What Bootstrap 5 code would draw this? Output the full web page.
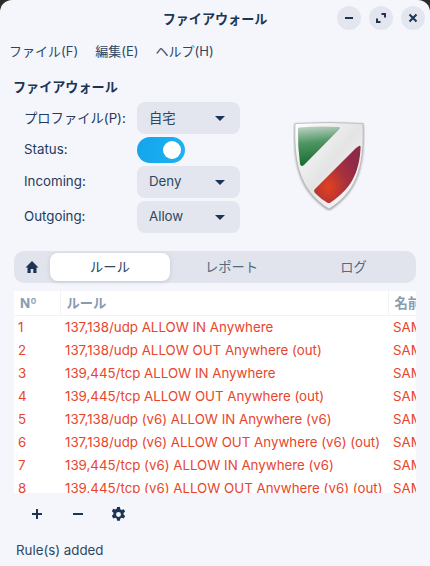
<!doctype html>
<html lang="ja">
<head>
<meta charset="utf-8">
<title>ファイアウォール</title>
<link href="https://cdn.jsdelivr.net/npm/bootstrap@5.3.0/dist/css/bootstrap.min.css" rel="stylesheet">
<style>
html,body{height:100%;margin:0;background:#2b2b2b;overflow:hidden}
body{font-family:Inter,"Noto Sans CJK JP",sans-serif;font-size:13.3px;color:#1f3a5c;line-height:16px}
.win{width:430px;height:566px;background:#f5f6fb;border-radius:12px 12px 0 0;overflow:hidden}
.titlebar{height:38px;position:relative}
.wintitle{font-weight:700;font-size:13.1px;color:#1c3554}
.winbtns{position:absolute;right:5px;top:6px;gap:8px}
.winbtn{width:24px;height:24px;border-radius:50%;background:#e3e6ee}
.menubar{height:26px;padding-left:9px;gap:17px;color:#2c4663;font-size:13px}
.heading{font-weight:700;margin:14px 0 0 13px;height:18px;line-height:18px;color:#1c3554;font-size:13.1px}
.formarea{margin-top:6px;padding-left:24px;padding-right:14px;height:131px}
.formcol{width:216px}
.lbl{width:113px}
.latintxt{padding-bottom:2px}
.rowh{height:32px}
.rowsw{height:26px;margin:3px 0}
.rowgap{margin-top:3px}
.sel{width:103px;height:32px;background:#e3e6ee;border-radius:8px;padding:0 15px 0 12px;color:#2c4663}
.caret{width:0;height:0;border-left:5px solid transparent;border-right:5px solid transparent;border-top:5px solid #1c3554}
.swt{width:48px;height:26px;border-radius:13px;background:linear-gradient(100deg,#13a4ec,#1fb2f2);padding:4px 4px 4px 26px}
.knob{width:18px;height:18px;border-radius:50%;background:#fff}
.shield{flex:1;padding-left:2px}
.shieldsvg{margin-top:19px}
.tabsbar{margin:18px 14px 0;height:32px;background:#e1e4ec;border-radius:10px;padding:2px 0}
.homebtn{width:36px}
.tabact{width:120px;background:#fff;border-radius:8px;box-shadow:0 1px 4px rgba(30,50,90,.15);color:#2c4663}
.tabitem{width:123px;color:#55697f}
.tabitem.lastt{width:121px}
.tblwrap{margin:8px 14px 0;height:202px;overflow:hidden;background:#fff}
.ruletbl{table-layout:fixed;width:500px;border-collapse:collapse;color:#e8452c;white-space:nowrap}
.ruletbl th{height:24px;font-weight:700;color:#8a9bb0;border-right:1px solid #f0f2f6;border-bottom:1px solid #f0f2f6;padding:0 0 0 6px;overflow:hidden}
.ruletbl td{height:23px;padding:0 0 0 5px;overflow:hidden}
.ruletbl td:first-child{padding-left:4px}
.toolbar{height:42px;padding-left:16px}
.toolbtn{width:41px}
.statusline{margin:7px 0 0 16px;color:#2c4663}
</style>
</head>
<body>
<div class="win d-flex flex-column">
  <div class="titlebar d-flex align-items-center justify-content-center">
    <span class="wintitle">ファイアウォール</span>
    <div class="winbtns d-flex">
      <div class="winbtn d-flex align-items-center justify-content-center"><svg width="10" height="10" viewBox="0 0 10 10"><path d="M1 5h8" stroke="#1c3554" stroke-width="2"/></svg></div>
      <div class="winbtn d-flex align-items-center justify-content-center"><svg width="10" height="10" viewBox="0 0 10 10" fill="none" stroke="#1c3554" stroke-width="2"><path d="M5.500 1H9V4.500M4.500 9H1V5.500"/></svg></div>
      <div class="winbtn d-flex align-items-center justify-content-center"><svg width="10" height="10" viewBox="0 0 10 10"><path d="M1.500 1.500l7 7M8.500 1.500l-7 7" stroke="#1c3554" stroke-width="2"/></svg></div>
    </div>
  </div>
  <div class="menubar d-flex align-items-center">
    <span>ファイル(F)</span><span>編集(E)</span><span>ヘルプ(H)</span>
  </div>
  <div class="heading">ファイアウォール</div>
  <div class="formarea d-flex">
    <div class="formcol">
      <div class="d-flex align-items-center rowh"><span class="lbl">プロファイル(P):</span><div class="sel d-flex align-items-center justify-content-between"><span>自宅</span><i class="caret"></i></div></div>
      <div class="d-flex align-items-center rowsw"><span class="lbl latintxt">Status:</span><div class="swt"><div class="knob"></div></div></div>
      <div class="d-flex align-items-center rowh"><span class="lbl latintxt">Incoming:</span><div class="sel d-flex align-items-center justify-content-between"><span class="latintxt">Deny</span><i class="caret"></i></div></div>
      <div class="d-flex align-items-center rowh rowgap"><span class="lbl latintxt">Outgoing:</span><div class="sel d-flex align-items-center justify-content-between"><span class="latintxt">Allow</span><i class="caret"></i></div></div>
    </div>
    <div class="shield d-flex justify-content-center align-items-start">
      <svg class="shieldsvg" width="72" height="90" viewBox="0 0 72 90">
        <defs>
          <linearGradient id="g1" x1="0.3" y1="0" x2="0.4" y2="1"><stop offset="0" stop-color="#bcd0c2"/><stop offset=".4" stop-color="#4f9663"/><stop offset="1" stop-color="#136a2c"/></linearGradient>
          <radialGradient id="g2" cx=".3" cy=".72" r=".7"><stop offset="0" stop-color="#e4411f"/><stop offset=".55" stop-color="#a8313c"/><stop offset="1" stop-color="#8f2a46"/></radialGradient>
          <linearGradient id="g3" x1="0" y1="0" x2="1" y2="1"><stop offset="0" stop-color="#ffffff"/><stop offset=".5" stop-color="#e4e4e4"/><stop offset="1" stop-color="#ffffff"/></linearGradient>
          <filter id="sh" x="-10%" y="-10%" width="120%" height="120%"><feDropShadow dx="0" dy="1" stdDeviation="1" flood-color="#333" flood-opacity=".55"/></filter>
        </defs>
        <path d="M2 2.500Q36 .5 70 2.500C71 38 68 68 36 88C4 68 1 38 2 2.500Z" fill="url(#g3)" stroke="#b5b5b5" stroke-width=".8" filter="url(#sh)"/>
        <path d="M6 6.500Q25 5 46 6Q48 6.500 46 8.500L11 44Q8 46.500 7 43Q4.500 25 5 8Q5 6.500 6 6.500Z" fill="url(#g1)"/>
        <path d="M66 25Q68 24 67.500 28C66 52 58 68 37.500 81.500Q36 82.500 34 81.500Q28 78 22.500 72.500Q20 70 22 68L63 27Z" fill="url(#g2)"/>
      </svg>
    </div>
  </div>
  <div class="tabsbar d-flex">
    <div class="homebtn d-flex align-items-center justify-content-center"><svg width="14" height="14" viewBox="0 0 14 14"><path d="M7 1L0.500 7.500H2.500V13H5.700V9H8.300V13H11.500V7.500H13.500Z" fill="#1c3554"/></svg></div>
    <div class="tabact d-flex align-items-center justify-content-center">ルール</div>
    <div class="tabitem d-flex align-items-center justify-content-center">レポート</div>
    <div class="tabitem lastt d-flex align-items-center justify-content-center">ログ</div>
  </div>
  <div class="tblwrap">
    <table class="ruletbl">
      <colgroup><col style="width:46px"><col style="width:328px"><col style="width:126px"></colgroup>
      <thead><tr><th>Nº</th><th>ルール</th><th>名前</th></tr></thead>
      <tbody>
        <tr><td>1</td><td>137,138/udp ALLOW IN Anywhere</td><td>SAMBA</td></tr>
        <tr><td>2</td><td>137,138/udp ALLOW OUT Anywhere (out)</td><td>SAMBA</td></tr>
        <tr><td>3</td><td>139,445/tcp ALLOW IN Anywhere</td><td>SAMBA</td></tr>
        <tr><td>4</td><td>139,445/tcp ALLOW OUT Anywhere (out)</td><td>SAMBA</td></tr>
        <tr><td>5</td><td>137,138/udp (v6) ALLOW IN Anywhere (v6)</td><td>SAMBA</td></tr>
        <tr><td>6</td><td>137,138/udp (v6) ALLOW OUT Anywhere (v6) (out)</td><td>SAMBA</td></tr>
        <tr><td>7</td><td>139,445/tcp (v6) ALLOW IN Anywhere (v6)</td><td>SAMBA</td></tr>
        <tr><td>8</td><td>139,445/tcp (v6) ALLOW OUT Anywhere (v6) (out)</td><td>SAMBA</td></tr>
      </tbody>
    </table>
  </div>
  <div class="toolbar d-flex align-items-center">
    <div class="toolbtn d-flex justify-content-center"><svg width="12" height="12" viewBox="0 0 12 12"><path d="M1 6h10M6 1v10" stroke="#1c3554" stroke-width="2"/></svg></div>
    <div class="toolbtn d-flex justify-content-center"><svg width="12" height="12" viewBox="0 0 12 12"><path d="M1 6h10" stroke="#1c3554" stroke-width="2"/></svg></div>
    <div class="toolbtn d-flex justify-content-center"><svg width="15" height="15" viewBox="0 0 14 14"><path fill="#1c3554" fill-rule="evenodd" d="M5.700 0h2.600l.4 2 1.300.7 1.900-.7 1.300 2.300-1.500 1.300v1.500l1.500 1.300-1.300 2.300-1.900-.7-1.300.8-.4 2H5.700l-.4-2-1.300-.8-1.900.7L.8 8.100l1.500-1.300V5.300L.8 4l1.300-2.300 1.900.7 1.300-.7ZM7 4.700a2.300 2.300 0 1 0 0 4.600 2.300 2.300 0 0 0 0-4.600Z"/></svg></div>
  </div>
  <div class="statusline">Rule(s) added</div>
</div>
<script src="https://cdn.jsdelivr.net/npm/bootstrap@5.3.0/dist/js/bootstrap.bundle.min.js"></script>
</body>
</html>
